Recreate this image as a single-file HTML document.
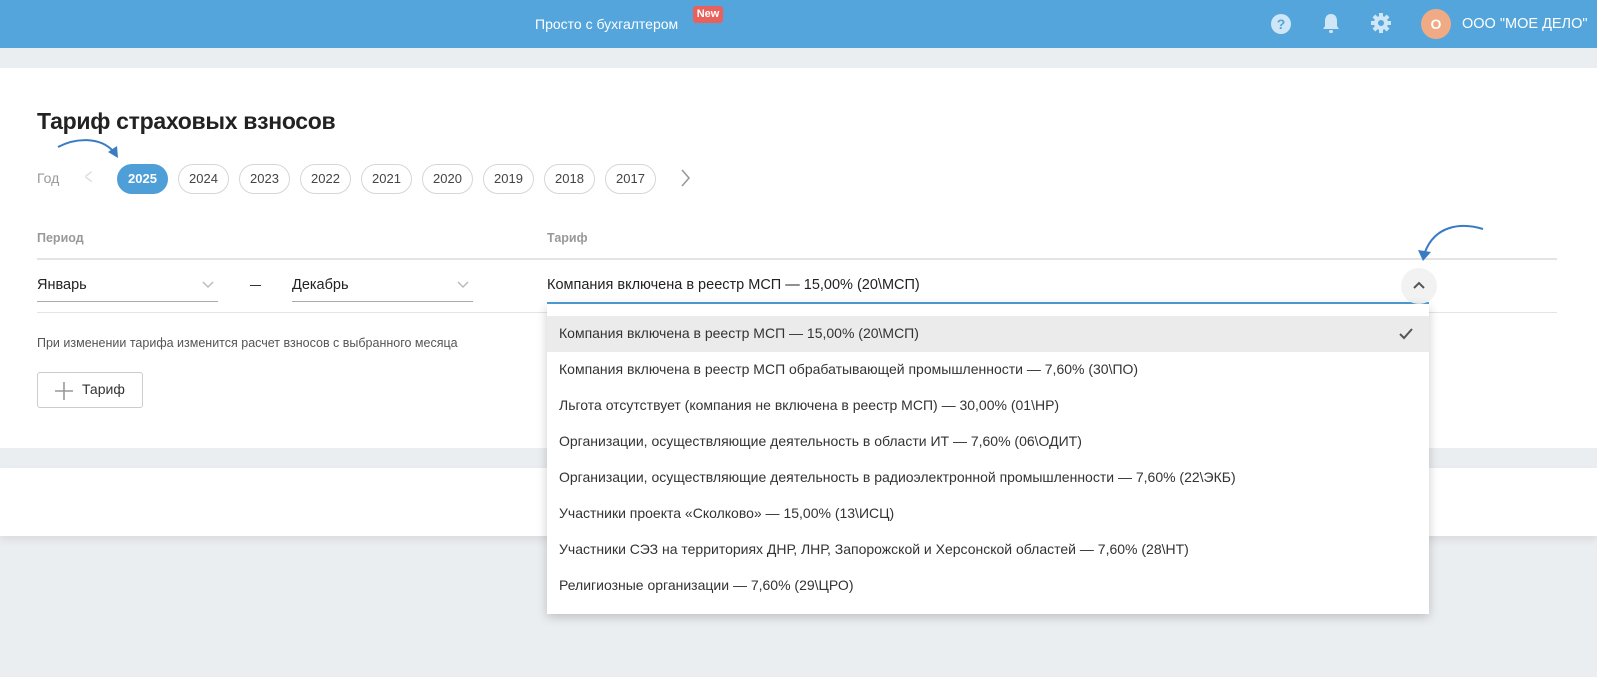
<!DOCTYPE html>
<html><head><meta charset="utf-8"><style>
*{margin:0;padding:0;box-sizing:border-box}
body{width:1597px;height:677px;background:#ebeef1;font-family:"Liberation Sans",sans-serif;position:relative;overflow:hidden;color:#222}
.a{position:absolute}
.hdr{left:0;top:0;width:1597px;height:48px;background:#53a5dc}
.card{left:0;top:68px;width:1597px;height:380px;background:#fff}
.card2{left:0;top:468px;width:1597px;height:68px;background:#fff;box-shadow:0 4px 8px rgba(0,0,0,.08)}
.pill{top:164px;width:51px;height:30px;border:1px solid #d6d6d6;border-radius:15px;font-size:13px;color:#444;text-align:center;line-height:28px;background:#fff}
.pill.on{background:#4e9fd8;border-color:#4e9fd8;color:#fff;font-weight:bold}
.lbl{font-size:12.5px;color:#999;font-weight:bold}
.sel{font-size:14.5px;color:#222}
.dd{left:547px;top:304px;width:882px;height:310px;background:#fff;box-shadow:0 3px 10px rgba(0,0,0,.2)}
.it{position:absolute;left:12px;font-size:14px;color:#333;white-space:nowrap}
</style></head><body>
<div class="a hdr"></div>
<div class="a" style="left:535px;top:16px;color:#fff;font-size:14px">Просто с бухгалтером</div>
<div class="a" style="left:693px;top:6px;width:30px;height:17px;background:#e9605c;border-radius:3px;color:#fff;font-size:11px;font-weight:bold;text-align:center;line-height:17px">New</div>
<svg class="a" style="left:1270px;top:13px" width="22" height="22" viewBox="0 0 22 22"><circle cx="11" cy="11" r="10" fill="#cfe6f7"/><text x="11" y="16" text-anchor="middle" font-family="Liberation Sans" font-weight="bold" font-size="14" fill="#53a5dc">?</text></svg>
<svg class="a" style="left:1321px;top:12px" width="20" height="22" viewBox="0 0 20 22"><path d="M10 2c-4 0-6 3-6 7v5l-2 3h16l-2-3V9c0-4-2-7-6-7z" fill="#cfe6f7"/><rect x="8" y="18" width="4" height="3" rx="1.5" fill="#cfe6f7"/></svg>
<svg class="a" style="left:1370px;top:12px" width="22" height="22" viewBox="0 0 22 22"><g fill="#cfe6f7"><circle cx="11" cy="11" r="7"/><rect x="9" y="1" width="4" height="20"/><rect x="1" y="9" width="20" height="4"/><rect x="9" y="1" width="4" height="20" transform="rotate(45 11 11)"/><rect x="9" y="1" width="4" height="20" transform="rotate(-45 11 11)"/></g><circle cx="11" cy="11" r="3" fill="#53a5dc"/></svg>
<div class="a" style="left:1421px;top:9px;width:30px;height:30px;border-radius:50%;background:#f0ab84;color:#fff;font-weight:bold;font-size:14px;text-align:center;line-height:30px">О</div>
<div class="a" style="left:1462px;top:16px;color:#fff;font-size:14.5px">ООО "МОЕ ДЕЛО"</div>

<div class="a card"></div>
<div class="a card2"></div>
<div class="a" style="left:37px;top:108px;font-size:23px;color:#222;font-weight:bold;letter-spacing:-0.3px">Тариф страховых взносов</div>
<svg class="a" style="left:50px;top:130px" width="80" height="35"><path d="M8 17 C25 8 50 6 64 22" stroke="#3a7cc4" stroke-width="2" fill="none"/><path d="M58 22 L68 28 L67 16 Z" fill="#3a7cc4"/></svg>
<div class="a" style="left:37px;top:170px;font-size:14px;color:#999">Год</div>
<div class="a" style="left:82px;top:164px;font-size:22px;color:#ddd;transform:scaleX(.6)">&lt;</div>
<div class="a pill on" style="left:117px">2025</div>
<div class="a pill" style="left:178px">2024</div>
<div class="a pill" style="left:239px">2023</div>
<div class="a pill" style="left:300px">2022</div>
<div class="a pill" style="left:361px">2021</div>
<div class="a pill" style="left:422px">2020</div>
<div class="a pill" style="left:483px">2019</div>
<div class="a pill" style="left:544px">2018</div>
<div class="a pill" style="left:605px">2017</div>
<svg class="a" style="left:680px;top:169px" width="12" height="20"><path d="M2 1 L9 9 L2 17" stroke="#999" stroke-width="1.6" fill="none"/></svg>

<div class="a lbl" style="left:37px;top:231px">Период</div>
<div class="a lbl" style="left:547px;top:231px">Тариф</div>
<div class="a" style="left:37px;top:258px;width:1520px;height:2px;background:#e4e4e4"></div>
<div class="a sel" style="left:37px;top:277px">Январь</div>
<div class="a" style="left:37px;top:301px;width:181px;height:1px;background:#aaa"></div>
<svg class="a" style="left:202px;top:281px" width="12" height="8"><path d="M1 1 L6 6 L11 1" stroke="#bbb" stroke-width="1.5" fill="none"/></svg>
<div class="a" style="left:250px;top:285px;width:11px;height:1px;background:#333"></div>
<div class="a sel" style="left:292px;top:277px">Декабрь</div>
<div class="a" style="left:292px;top:301px;width:181px;height:1px;background:#aaa"></div>
<svg class="a" style="left:457px;top:281px" width="12" height="8"><path d="M1 1 L6 6 L11 1" stroke="#bbb" stroke-width="1.5" fill="none"/></svg>
<div class="a sel" style="left:547px;top:277px">Компания включена в реестр МСП — 15,00% (20\МСП)</div>
<div class="a" style="left:547px;top:302px;width:882px;height:2px;background:#4e9fd8"></div>
<div class="a" style="left:1401px;top:268px;width:36px;height:36px;border-radius:50%;background:#f2f2f2"></div>
<svg class="a" style="left:1413px;top:281px" width="12" height="8"><path d="M1 7 L6 2 L11 7" stroke="#555" stroke-width="2" fill="none"/></svg>
<svg class="a" style="left:1410px;top:220px" width="80" height="45"><path d="M73 9 C50 2 25 6 15 32" stroke="#3a7cc4" stroke-width="2" fill="none"/><path d="M8 30 L13 41 L21 32 Z" fill="#3a7cc4"/></svg>
<div class="a" style="left:37px;top:312px;width:1520px;height:1px;background:#e4e4e4"></div>
<div class="a" style="left:37px;top:336px;font-size:12.5px;color:#555">При изменении тарифа изменится расчет взносов с выбранного месяца</div>
<div class="a" style="left:37px;top:372px;width:106px;height:36px;border:1px solid #ccc;border-radius:3px"></div>
<svg class="a" style="left:54px;top:381px" width="20" height="20"><path d="M10 1V19M1 10H19" stroke="#999" stroke-width="1.6"/></svg>
<div class="a" style="left:82px;top:381px;font-size:14px;color:#333">Тариф</div>

<div class="a dd">
<div class="a" style="left:0;top:12px;width:882px;height:36px;background:#ebebeb"></div>
<div class="it" style="top:21px">Компания включена в реестр МСП — 15,00% (20\МСП)</div>
<svg class="a" style="left:852px;top:24px" width="14" height="12"><path d="M1 6 L5 10 L13 1" stroke="#555" stroke-width="2" fill="none"/></svg>
<div class="it" style="top:57px">Компания включена в реестр МСП обрабатывающей промышленности — 7,60% (30\ПО)</div>
<div class="it" style="top:93px">Льгота отсутствует (компания не включена в реестр МСП) — 30,00% (01\НР)</div>
<div class="it" style="top:129px">Организации, осуществляющие деятельность в области ИТ — 7,60% (06\ОДИТ)</div>
<div class="it" style="top:165px">Организации, осуществляющие деятельность в радиоэлектронной промышленности — 7,60% (22\ЭКБ)</div>
<div class="it" style="top:201px">Участники проекта «Сколково» — 15,00% (13\ИСЦ)</div>
<div class="it" style="top:237px">Участники СЭЗ на территориях ДНР, ЛНР, Запорожской и Херсонской областей — 7,60% (28\НТ)</div>
<div class="it" style="top:273px">Религиозные организации — 7,60% (29\ЦРО)</div>
</div>
</body></html>
